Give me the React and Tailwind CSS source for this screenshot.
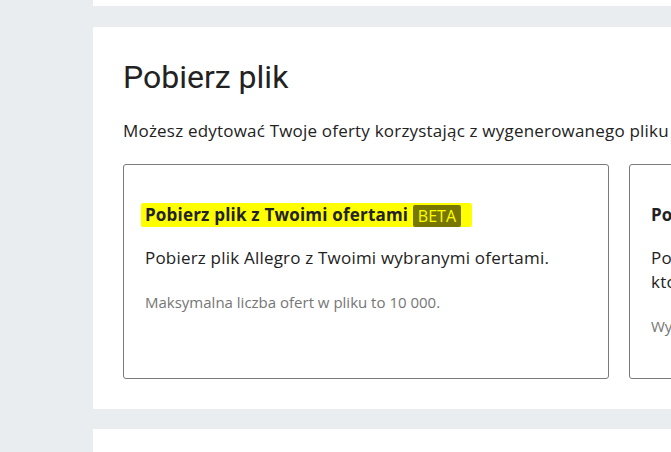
import React from 'react';

const cards = [
    {
        title: 'Pobierz plik z Twoimi ofertami',
        beta: true,
        text: 'Pobierz plik Allegro z Twoimi wybranymi ofertami.',
        note: 'Maksymalna liczba ofert w pliku to 10 000.',
    },
    {
        title: 'Pobierz pusty szablon pliku',
        beta: false,
        text: 'Pobierz pusty szablon pliku Allegro dla kategorii ofert, który wypełnisz danymi nowych ofert.',
        note: 'Wybierz kategorię, w której chcesz wystawić oferty.',
    },
];

const FileCard = ({ card }) => (
    <div className="w-[486px] shrink-0 border border-[#7a7a7a] rounded-[3px] px-[21px] pt-[38px] pb-[42px]">
        <h3 className="text-[17px] leading-[24px] font-bold tracking-[0.2px] text-[#222]">
            {card.beta ? (
                <span className="inline-block bg-[#ffff00] pl-[4px] pr-[11px] -ml-[4px] rounded-[2px]">
                    {card.title}{' '}
                    <span className="inline-block bg-[#777700] text-[#ffff00] font-normal text-[16px] leading-[22px] px-[5px] rounded-[2px] align-[-1px] tracking-normal">BETA</span>
                </span>
            ) : card.title}
        </h3>
        <p className="mt-[19px] text-[17px] leading-[24px] tracking-[0.2px] text-[#222]">{card.text}</p>
        <p className="mt-[22px] text-[15px] leading-[20px] text-[#767676]">{card.note}</p>
    </div>
);

export default function App() {
    return (
        <div className="flex h-[452px] overflow-hidden bg-[#e9edf0]" style={{ fontFamily: '"Open Sans", sans-serif' }}>
            <div className="w-[93px] shrink-0"></div>
            <div className="flex-1 min-w-0 flex flex-col overflow-hidden">
                <div className="h-[6px] bg-white shrink-0"></div>
                <section className="mt-[21px] h-[382px] shrink-0 bg-white pl-[30px] pt-[31px]">
                    <h2 className="text-[32px] leading-[38px] text-[#222]" style={{ fontFamily: 'Roboto, sans-serif' }}>Pobierz plik</h2>
                    <p className="mt-[23px] text-[17px] leading-[24px] tracking-[0.2px] text-[#222] whitespace-nowrap">
                        Możesz edytować Twoje oferty korzystając z wygenerowanego pliku Allegro w formacie Excel.
                    </p>
                    <div className="mt-[21px] flex gap-[20px]">
                        {cards.map(card => <FileCard key={card.title} card={card} />)}
                    </div>
                </section>
                <section className="mt-[20px] flex-1 bg-white"></section>
            </div>
        </div>
    );
}
